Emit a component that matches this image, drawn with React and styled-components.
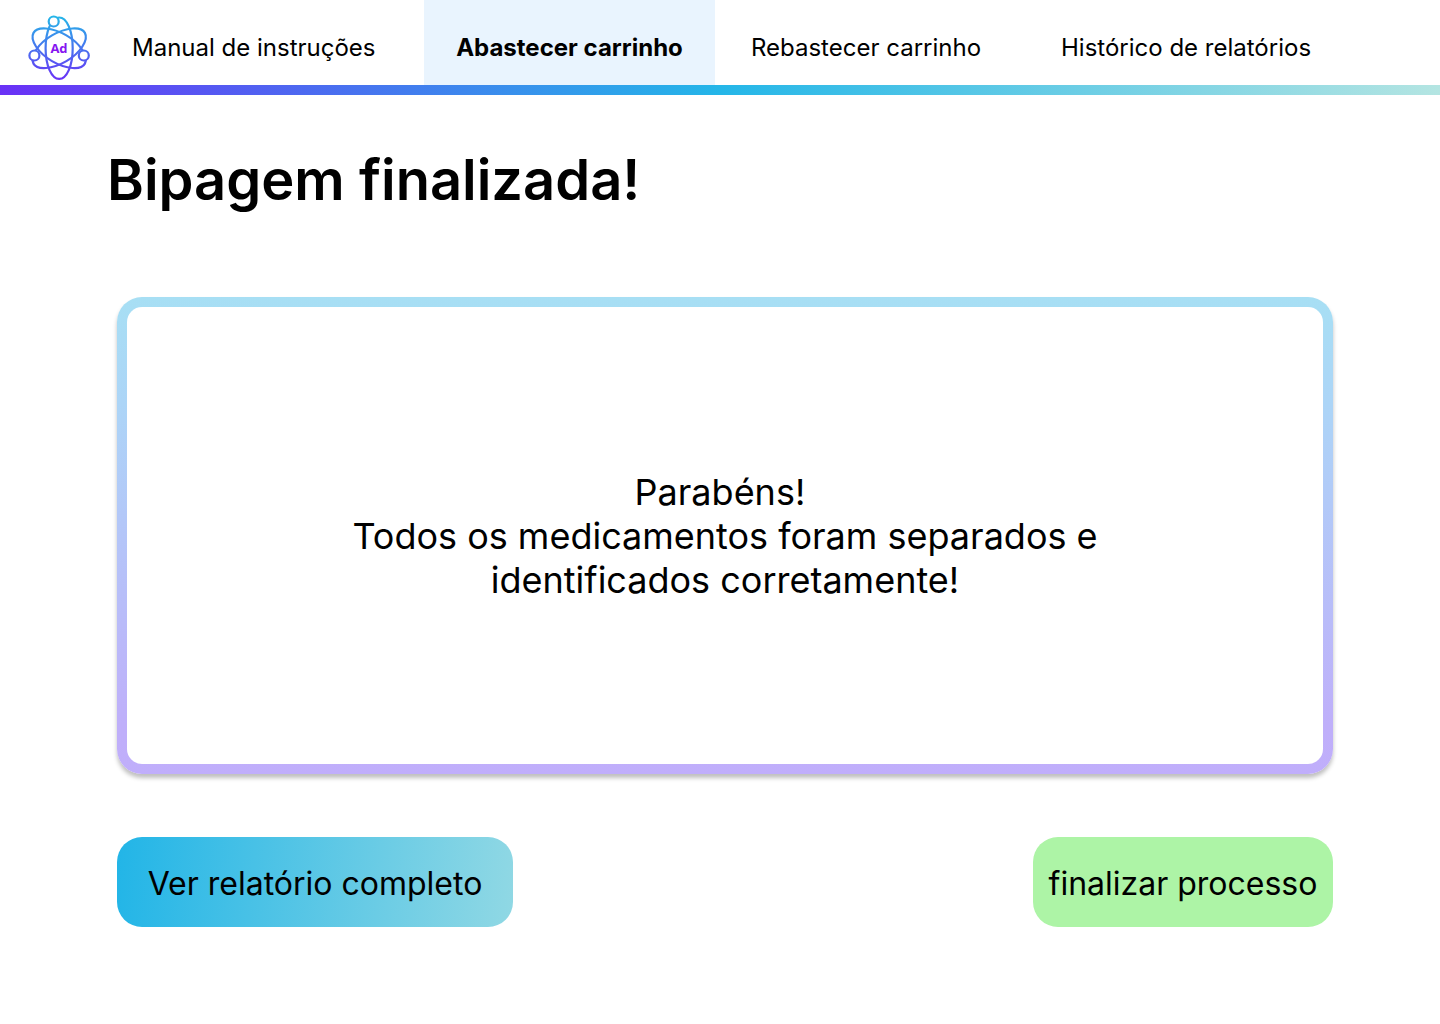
import React from "react";
import styled, { createGlobalStyle } from "styled-components";

const GlobalStyle = createGlobalStyle`
  *, *::before, *::after { box-sizing: border-box; }
  body {
    margin: 0;
    background: #fff;
    color: #000;
    font-family: Inter, "Liberation Sans", sans-serif;
  }
`;

const Header = styled.header`
  display: flex;
  background: #fff;
`;

const Rule = styled.div`
  height: 10px;
  background: linear-gradient(90deg, #6a31f6 0%, #24b6e8 50%, #b4e5e2 100%);
`;

const LogoLink = styled.a`
  flex: none;
  padding: 8px 0 0 20px;
  height: 85px;

  svg {
    display: block;
  }
`;

const Nav = styled.nav`
  flex: 1;
  display: grid;
  grid-template-columns: 324fr 291fr 302fr 423fr;
`;

const NavLink = styled.a`
  display: flex;
  align-items: center;
  justify-content: ${(p) => (p.$centered ? "center" : "flex-start")};
  padding: 10px 0 0 ${(p) => p.$indent || 0}px;
  background: ${(p) => (p.$active ? "#e9f4fe" : "transparent")};
  color: #000;
  font-size: 24px;
  line-height: 29px;
  font-weight: ${(p) => (p.$active ? 700 : 400)};
  text-decoration: none;
  white-space: nowrap;
`;

const Main = styled.main`
  padding: 50px 107px 96px;
`;

const Title = styled.h1`
  margin: 0;
  font-size: 56px;
  line-height: 70px;
  font-weight: 600;
`;

const Content = styled.div`
  margin-left: 10px;
`;

const Card = styled.section`
  display: flex;
  align-items: center;
  justify-content: center;
  min-height: 477px;
  margin-top: 82px;
  padding: 32px;
  border: 10px solid transparent;
  border-radius: 25px;
  background:
    linear-gradient(#fff, #fff) padding-box,
    linear-gradient(180deg, #a7dff4 0%, #acd5f7 22%, #bfaffa 90%, #c0aefb 100%) border-box;
  box-shadow: 0 4px 4px rgba(0, 0, 0, 0.25);
`;

const Message = styled.p`
  max-width: 768px;
  margin: 0;
  font-size: 36px;
  line-height: 44px;
  text-align: center;
`;

const Actions = styled.div`
  display: flex;
  justify-content: space-between;
  gap: 24px;
  margin-top: 63px;
`;

const Button = styled.button`
  height: 90px;
  min-width: ${(p) => (p.$primary ? 396 : 300)}px;
  padding: 2px 0 0;
  border: 0;
  border-radius: 25px;
  background: ${(p) =>
    p.$primary ? "linear-gradient(95deg, #22b5e7 0%, #90d8e4 100%)" : "#adf4a6"};
  color: #000;
  font-family: inherit;
  font-size: 32px;
  line-height: 39px;
  cursor: pointer;
`;

function Logo() {
  return (
    <svg width="80" height="77" viewBox="0 0 80 77" fill="none" role="img" aria-label="Ad">
      <defs>
        <linearGradient id="orbit" gradientUnits="userSpaceOnUse" x1="39" y1="8" x2="39" y2="72">
          <stop offset="0" stopColor="#25b7e8" />
          <stop offset="1" stopColor="#6a31f6" />
        </linearGradient>
        <mask id="gaps" maskUnits="userSpaceOnUse" x="0" y="0" width="80" height="77">
          <rect width="80" height="77" fill="#fff" />
          <circle cx="33.7" cy="13.5" r="5" fill="#000" />
          <circle cx="14.4" cy="47.5" r="5" fill="#000" />
          <circle cx="63.8" cy="47.5" r="5" fill="#000" />
        </mask>
      </defs>
      <g stroke="url(#orbit)" strokeWidth="2.2">
        <g mask="url(#gaps)">
          <path d="M39.2 9.5C46.8 9.5 52.7 22.8 52.7 40.2S46.8 70.9 39.2 70.9S25.6 57.6 25.6 40.2S31.6 9.5 39.2 9.5Z" />
          <path d="M64.9 55.6C61.2 62.4 46.2 61.3 32 53.1S9.7 31.8 13.5 24.9S32.2 19.2 46.4 27.4S68.7 48.7 64.9 55.6Z" />
          <path d="M13.5 55.6C17.2 62.4 32.2 61.3 46.4 53.1S68.7 31.8 64.9 24.9S46.2 19.2 32 27.4S9.7 48.7 13.5 55.6Z" />
        </g>
        <circle cx="33.7" cy="13.5" r="5" />
        <circle cx="14.4" cy="47.5" r="5" />
        <circle cx="63.8" cy="47.5" r="5" />
      </g>
      <text
        x="39"
        y="45"
        textAnchor="middle"
        fill="#8614f0"
        fontFamily="'Open Sans', sans-serif"
        fontSize="13"
        fontWeight="700"
      >
        Ad
      </text>
    </svg>
  );
}

export default function App() {
  return (
    <>
      <GlobalStyle />
      <Header>
        <LogoLink href="#inicio">
          <Logo />
        </LogoLink>
        <Nav>
          <NavLink href="#manual" $indent={32}>Manual de instruções</NavLink>
          <NavLink href="#abastecer" $active $centered aria-current="page">
            Abastecer carrinho
          </NavLink>
          <NavLink href="#rebastecer" $centered>Rebastecer carrinho</NavLink>
          <NavLink href="#historico" $indent={44}>Histórico de relatórios</NavLink>
        </Nav>
      </Header>
      <Rule />
      <Main>
        <Title>Bipagem finalizada!</Title>
        <Content>
          <Card>
            <Message>
              Parabéns!&nbsp;
              <br />
              Todos os medicamentos foram separados e identificados corretamente!
            </Message>
          </Card>
          <Actions>
            <Button type="button" $primary>Ver relatório completo</Button>
            <Button type="button">finalizar processo</Button>
          </Actions>
        </Content>
      </Main>
    </>
  );
}
